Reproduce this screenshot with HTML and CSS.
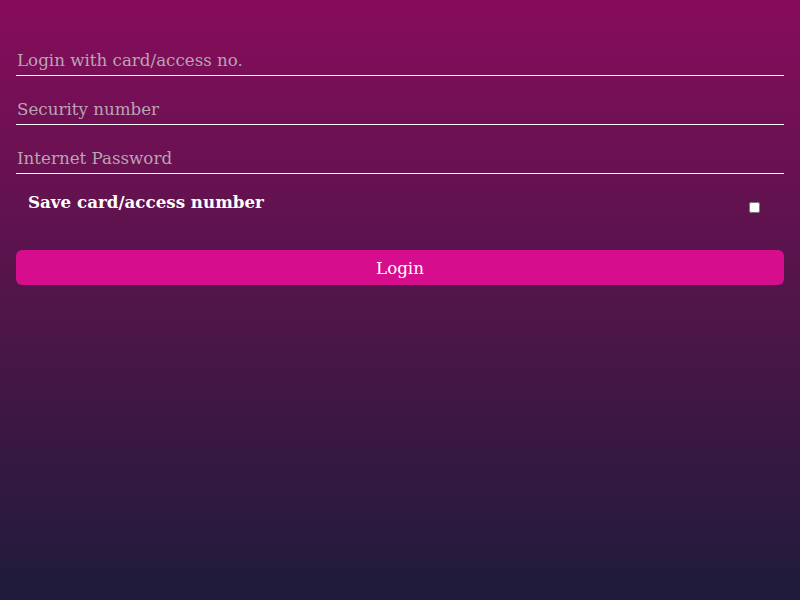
FILE: index.html
```html
<!DOCTYPE html>
<html>
<head>
<meta charset="utf-8">
<link rel="stylesheet" href="styles.css">
</head>
<body>
<form class="login">
  <input class="field" type="text" placeholder="Login with card/access no.">
  <input class="field" type="text" placeholder="Security number">
  <input class="field" type="password" placeholder="Internet Password">
  <label class="save">
    <span class="save-text">Save card/access number</span>
    <input class="check" type="checkbox">
  </label>
  <button class="btn" type="button">Login</button>
</form>
</body>
</html>
```
FILE: styles.css
```css
html, body {
  margin: 0;
  height: 100%;
}
body {
  background: linear-gradient(to bottom, #870c5b 0%, #51154a 50%, #1e1b3b 100%);
  font-family: "DejaVu Serif", serif;
}
.login {
  display: flex;
  flex-direction: column;
  padding: 45px 16px 0;
}
.field {
  background: transparent;
  border: none;
  border-bottom: 1px solid #ffffff;
  height: 30px;
  padding: 0 1px;
  margin-bottom: 18px;
  font-family: "DejaVu Serif", serif;
  font-size: 16.7px;
  color: #fff;
  outline: none;
}
.field::placeholder {
  color: #b9a4b4;
  font-weight: 300;
}
.save {
  display: flex;
  justify-content: space-between;
  align-items: flex-start;
  margin-top: 0;
  padding: 0 24px 0 12px;
  height: 58px;
}
.save-text {
  color: #fff;
  font-weight: bold;
  font-size: 16.7px;
}
.check {
  width: 11px;
  height: 11px;
  margin: 10px 0 0;
}
.btn {
  height: 35px;
  border: none;
  border-radius: 6px;
  background: #d60d8c;
  color: #fff;
  font-family: "DejaVu Serif", serif;
  font-size: 16.7px;
}
```
